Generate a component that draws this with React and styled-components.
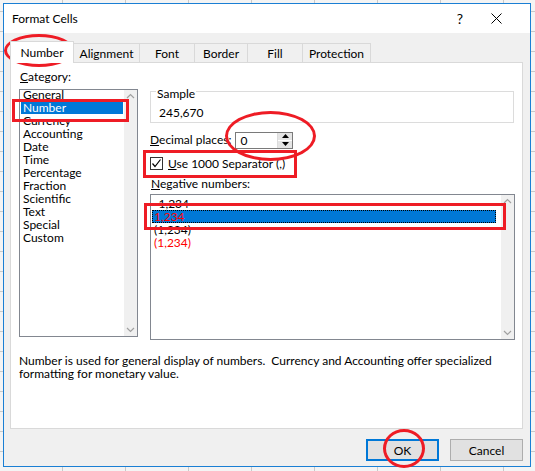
import React from 'react';
import styled, { createGlobalStyle } from 'styled-components';

const GlobalStyle = createGlobalStyle`
  html, body { margin: 0; padding: 0; }
  body {
    font-family: Lato, "Noto Sans", sans-serif;
    font-size: 12px;
    color: #000;
    background: #eef0ef;
  }
`;

const Page = styled.div`
  position: relative;
  width: 535px;
  height: 471px;
  overflow: hidden;
  padding: 3px 4px 4px 3px;
  box-sizing: border-box;
  background:
    repeating-linear-gradient(90deg, transparent 0 62px, #c9c9c9 62px 63px),
    repeating-linear-gradient(0deg, transparent 0 19px, #c9c9c9 19px 20px),
    #f4f4f4;
`;

const Dialog = styled.div`
  height: 100%;
  box-sizing: border-box;
  border: 1px solid #1a7fd4;
  background: #f0f0f0;
  display: flex;
  flex-direction: column;
`;

const TitleBar = styled.div`
  height: 29px;
  background: #fff;
  display: flex;
  align-items: center;
  padding: 0 16px 0 8px;
  flex-shrink: 0;
`;

const Title = styled.div`
  flex: 1;
  font-size: 12px;
`;

const TitleButton = styled.div`
  width: 36px;
  display: flex;
  justify-content: center;
  align-items: center;
  font-size: 14px;
`;

const Body = styled.div`
  flex: 1;
  display: flex;
  flex-direction: column;
  padding: 9px 7px 0 6px;
`;

const Tabs = styled.div`
  display: flex;
  align-items: flex-end;
  height: 20px;
  padding-left: 1px;
`;

const Tab = styled.div`
  width: ${p => p.$w}px;
  height: ${p => (p.$active ? 22 : 19)}px;
  box-sizing: border-box;
  border: 1px solid #d9d9d9;
  border-bottom: none;
  margin-left: -1px;
  background: ${p => (p.$active ? '#fff' : '#f0f0f0')};
  display: flex;
  align-items: center;
  justify-content: center;
  position: relative;
  z-index: ${p => (p.$active ? 2 : 1)};
  margin-bottom: ${p => (p.$active ? -1 : 0)}px;
`;

const Panel = styled.div`
  height: 367px;
  box-sizing: border-box;
  background: #fff;
  border: 1px solid #d9d9d9;
  padding: 7px 7px 0 8px;
  display: flex;
  flex-direction: column;
`;

const Columns = styled.div`
  display: flex;
  gap: 12px;
`;

const LeftCol = styled.div`
  width: 119px;
  display: flex;
  flex-direction: column;
`;

const RightCol = styled.div`
  flex: 1;
  display: flex;
  flex-direction: column;
`;

const Label = styled.div`
  height: 14px;
  line-height: 14px;
  margin: ${p => p.$m || '0'};
  white-space: nowrap;
`;

const ListBox = styled.div`
  height: ${p => p.$h}px;
  box-sizing: border-box;
  border: 1px solid #828790;
  display: flex;
  background: #fff;
  overflow: hidden;
`;

const ListItems = styled.div`
  flex: 1;
  padding: ${p => p.$pad || '3px 1px'};
  display: flex;
  flex-direction: column;
`;

const ListItem = styled.div`
  height: 13px;
  line-height: 13px;
  padding-left: 2px;
  white-space: nowrap;
  color: ${p => (p.$red ? '#ff0000' : p.$selected ? '#fff' : '#000')};
  background: ${p => (p.$selected ? '#0078d7' : 'transparent')};
  outline: ${p => (p.$focus ? '1px dotted #000' : 'none')};
  outline-offset: -1px;
  margin-right: ${p => (p.$focus ? 4 : 0)}px;
`;

const ScrollTrack = styled.div`
  width: 13px;
  background: #f0f0f0;
  display: flex;
  flex-direction: column;
  justify-content: space-between;
  align-items: center;
  padding: 3px 0;
`;

const Arrow = styled.svg`
  width: 9px;
  height: 6px;
`;

const SampleBox = styled.div`
  position: relative;
  margin-top: 21px;
  height: 32px;
  box-sizing: border-box;
  border: 1px solid #dcdcdc;
  padding: 14px 0 0 8px;
  margin-right: 1px;
`;

const Legend = styled.div`
  position: absolute;
  top: -5px;
  left: 5px;
  padding: 0 1px;
  background: #fff;
  line-height: 14px;
`;

const SampleValue = styled.div`
  line-height: 14px;
`;

const DecimalRow = styled.div`
  display: flex;
  align-items: center;
  gap: 4px;
  margin-top: 9px;
  height: 16px;
`;

const SpinInput = styled.div`
  width: 58px;
  height: 17px;
  box-sizing: border-box;
  border: 1px solid #7a7a7a;
  display: flex;
  align-items: center;
  padding-left: 4px;
  background: #fff;
`;

const SpinValue = styled.div`
  flex: 1;
`;

const SpinButtons = styled.div`
  width: 14px;
  height: 100%;
  display: flex;
  flex-direction: column;
  border-left: 1px solid #dcdcdc;
`;

const SpinBtn = styled.div`
  flex: 1;
  background: #e5e5e5;
  display: flex;
  align-items: center;
  justify-content: center;
  & + & { border-top: 1px solid #fff; }
`;

const CheckRow = styled.div`
  display: flex;
  align-items: center;
  gap: 5px;
  margin-top: 9px;
  height: 13px;
`;

const CheckBox = styled.div`
  width: 13px;
  height: 13px;
  box-sizing: border-box;
  border: 1px solid #333;
  background: #fff;
  display: flex;
  align-items: center;
  justify-content: center;
`;

const Description = styled.div`
  margin-top: 14px;
  line-height: 13px;
  white-space: nowrap;
`;

const Footer = styled.div`
  display: flex;
  justify-content: flex-end;
  gap: 11px;
  padding: 10px 0 0 0;
`;

const Button = styled.div`
  width: 73px;
  height: 22px;
  box-sizing: border-box;
  border: ${p => (p.$default ? '2px solid #0078d7' : '1px solid #adadad')};
  background: #e1e1e1;
  display: flex;
  align-items: center;
  justify-content: center;
`;

const Mark = styled.div`
  position: absolute;
  left: ${p => p.$x}px;
  top: ${p => p.$y}px;
  width: ${p => p.$w}px;
  height: ${p => p.$h}px;
  box-sizing: border-box;
  border: 3px solid #ee1c25;
  border-radius: ${p => (p.$round ? '50%' : '0')};
  pointer-events: none;
`;

const UpArrow = ({ color = '#a0a0a0' }) => (
  <Arrow viewBox="0 0 9 6"><path d="M1 5 L4.5 1.5 L8 5" fill="none" stroke={color} strokeWidth="1.2" /></Arrow>
);
const DownArrow = ({ color = '#a0a0a0' }) => (
  <Arrow viewBox="0 0 9 6"><path d="M1 1 L4.5 4.5 L8 1" fill="none" stroke={color} strokeWidth="1.2" /></Arrow>
);

const tabs = [
  { name: 'Number', w: 64, active: true },
  { name: 'Alignment', w: 67 },
  { name: 'Font', w: 56 },
  { name: 'Border', w: 54 },
  { name: 'Fill', w: 56 },
  { name: 'Protection', w: 69 },
];

const categories = ['General', 'Number', 'Currency', 'Accounting', 'Date', 'Time', 'Percentage', 'Fraction', 'Scientific', 'Text', 'Special', 'Custom'];

const negatives = [
  { t: '-1,234' },
  { t: '1,234', red: true, selected: true },
  { t: '(1,234)' },
  { t: '(1,234)', red: true },
];

export default function App() {
  return (
    <>
      <GlobalStyle />
      <Page>
        <Dialog>
          <TitleBar>
            <Title>Format Cells</Title>
            <TitleButton>?</TitleButton>
            <TitleButton>
              <svg width="11" height="11" viewBox="0 0 11 11"><path d="M0.5 0.5 L10.5 10.5 M10.5 0.5 L0.5 10.5" stroke="#000" strokeWidth="1" /></svg>
            </TitleButton>
          </TitleBar>
          <Body>
            <Tabs>
              {tabs.map(t => (
                <Tab key={t.name} $w={t.w} $active={t.active}>{t.name}</Tab>
              ))}
            </Tabs>
            <Panel>
              <Columns>
                <LeftCol>
                  <Label $m="0 0 5px 1px"><u>C</u>ategory:</Label>
                  <ListBox $h={248}>
                    <ListItems $pad="0 1px">
                      <div style={{ marginTop: -2 }} />
                      {categories.map(c => (
                        <ListItem key={c} $selected={c === 'Number'}>{c}</ListItem>
                      ))}
                    </ListItems>
                    <ScrollTrack>
                      <UpArrow />
                      <DownArrow />
                    </ScrollTrack>
                  </ListBox>
                </LeftCol>
                <RightCol>
                  <SampleBox>
                    <Legend>Sample</Legend>
                    <SampleValue>245,670</SampleValue>
                  </SampleBox>
                  <DecimalRow>
                    <Label><u>D</u>ecimal places:</Label>
                    <SpinInput>
                      <SpinValue>0</SpinValue>
                      <SpinButtons>
                        <SpinBtn>
                          <svg width="7" height="4" viewBox="0 0 7 4"><path d="M0 4 L3.5 0 L7 4 Z" fill="#000" /></svg>
                        </SpinBtn>
                        <SpinBtn>
                          <svg width="7" height="4" viewBox="0 0 7 4"><path d="M0 0 L3.5 4 L7 0 Z" fill="#000" /></svg>
                        </SpinBtn>
                      </SpinButtons>
                    </SpinInput>
                  </DecimalRow>
                  <CheckRow>
                    <CheckBox>
                      <svg width="11" height="11" viewBox="0 0 11 11"><path d="M1.5 5.5 L4 8.5 L9.5 1.5" fill="none" stroke="#000" strokeWidth="1.2" /></svg>
                    </CheckBox>
                    <Label><u>U</u>se 1000 Separator (,)</Label>
                  </CheckRow>
                  <Label $m="7px 0 3px 1px"><u>N</u>egative numbers:</Label>
                  <ListBox $h={146}>
                    <ListItems $pad="2px 1px">
                      {negatives.map((n, i) => (
                        <ListItem key={i} $red={n.red} $selected={n.selected} $focus={n.selected}>{n.t}</ListItem>
                      ))}
                    </ListItems>
                    <ScrollTrack>
                      <UpArrow />
                      <DownArrow />
                    </ScrollTrack>
                  </ListBox>
                </RightCol>
              </Columns>
              <Description>
                Number is used for general display of numbers.&nbsp; Currency and Accounting offer specialized<br />
                formatting for monetary value.
              </Description>
            </Panel>
            <Footer>
              <Button $default>OK</Button>
              <Button>Cancel</Button>
            </Footer>
          </Body>
        </Dialog>

        <Mark $round $x={4} $y={34} $w={70} $h={33} />
        <Mark $x={12} $y={99} $w={117} $h={23} />
        <Mark $round $x={225} $y={111} $w={91} $h={50} />
        <Mark $x={143} $y={150} $w={154} $h={28} />
        <Mark $x={144} $y={203} $w={362} $h={27} />
        <Mark $round $x={383} $y={429} $w={42} $h={39} />
      </Page>
    </>
  );
}
